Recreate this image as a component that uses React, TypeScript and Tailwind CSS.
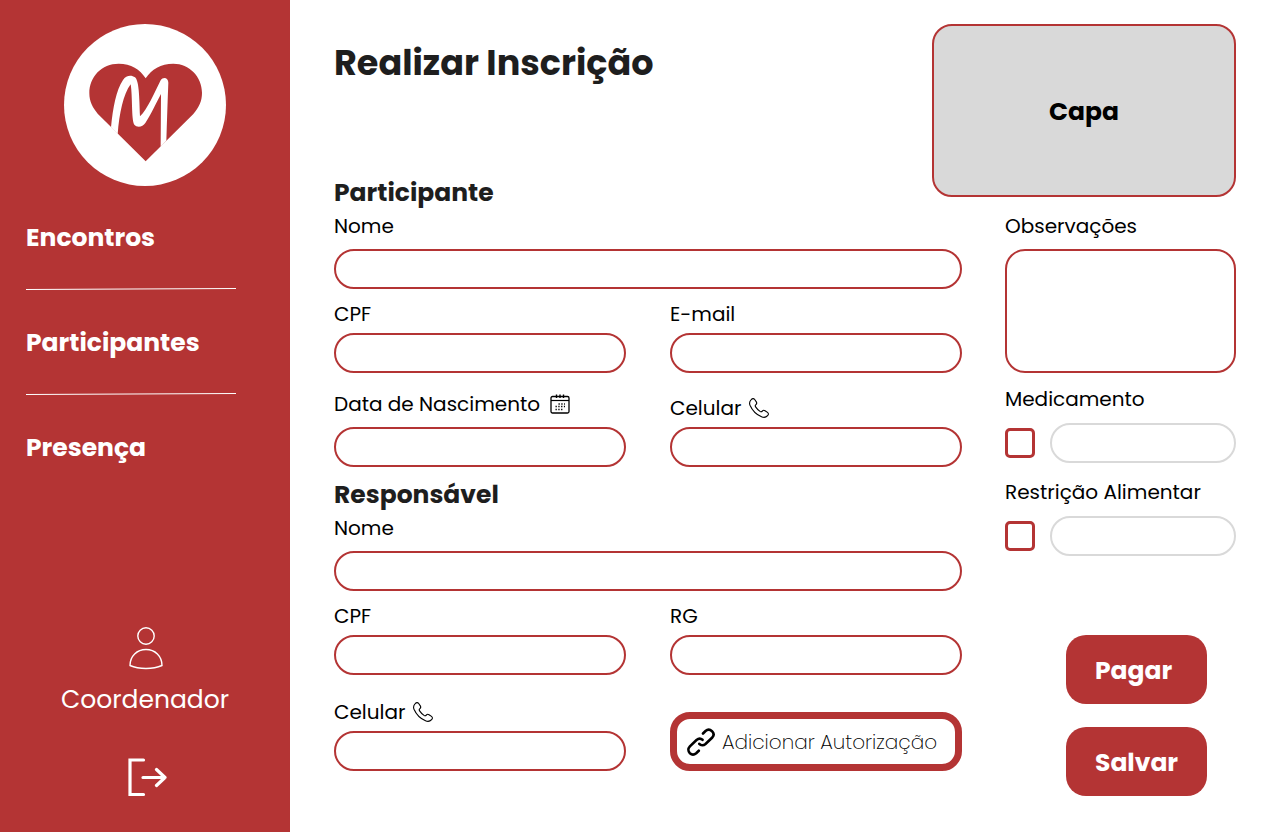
import type { ReactNode } from "react";

function Logo() {
  return (
    <svg viewBox="12 12 486 486" className="size-[162px]" role="img" aria-label="Logo">
      <circle cx="255" cy="255" r="243" fill="#fff" />
      <path
        d="M257 175C240 148 213 131 176 131C125 131 88 170 88 220C88 245 98 263 113 281L257 424L400 282C417 262 426 243 426 218C426 170 388 131 340 131C302 131 275 148 257 175Z"
        fill="#b43434"
      />
      <path
        d="M153 322C159 262 168 212 189 180C198 166 214 164 225 172C237 182 238 230 240 289C261 270 284 217 302 181C309 169 325 172 325 188C323 240 321 300 319 362L302 380L303 222C290 245 272 286 256 309C248 322 230 323 223 314C214 300 218 230 212 193C190 222 178 280 173 342Z"
        fill="#fff"
      />
    </svg>
  );
}

function PersonIcon() {
  return (
    <svg viewBox="-2 0 36 43" className="h-[43px] w-9" fill="none" stroke="currentColor" strokeWidth="1.4" aria-hidden="true">
      <circle cx="17" cy="9" r="8.2" />
      <path d="M1 38.5C1 29 8 22.500 17 22.500S33 29 33 38.500C24 42.500 10 42.500 1 38.500Z" strokeLinejoin="round" />
    </svg>
  );
}

function LogoutIcon() {
  return (
    <svg viewBox="-4 0 43 39" className="h-[39px] w-[43px]" fill="none" stroke="currentColor" strokeWidth="3.2" strokeLinecap="round" aria-hidden="true">
      <path d="M15.500 2H2V36.500H15.500" />
      <path d="M15 19.500H37M28.500 11.500L37 19.500L28.500 27.500" strokeLinejoin="round" />
    </svg>
  );
}

function CalendarIcon() {
  return (
    <svg viewBox="0 0 20 20" className="ml-0.5 size-5" fill="none" stroke="#000" aria-hidden="true">
      <rect x="1" y="2.500" width="18" height="16.500" rx="1.500" strokeWidth="1.300" />
      <path d="M1 6.500H19" strokeWidth="1.200" />
      <path d="M6.500 0.500V4M10 0.500V4M13.500 0.500V4" strokeWidth="1.400" />
      <path d="M8.500 10H15M5.500 12.500H15M5.500 15.500H12.500" strokeWidth="1.300" strokeDasharray="1.300 1.500" />
    </svg>
  );
}

function PhoneIcon() {
  return (
    <svg viewBox="0 0 20 20" className="size-5" fill="none" stroke="#000" strokeWidth="1.100" strokeLinejoin="round" aria-hidden="true">
      <path d="M2.200 1.600C3.400 0.300 4.800 0.300 5.700 1.500L7.300 3.900C8 5 7.800 5.900 6.900 6.600C6 7.300 6 8 6.600 8.900C7.800 10.700 9.300 12.200 11 13.400C11.900 14 12.700 13.900 13.300 13.100C14 12.200 15 12 16 12.700L18.500 14.400C19.700 15.300 19.700 16.500 18.600 17.700C17 19.400 15 19.900 12.500 18.800C7.300 16.500 3.200 12.200 1 7.200C0.100 5 0.700 3.100 2.200 1.600Z" />
    </svg>
  );
}

function LinkIcon() {
  return (
    <svg viewBox="0 0 28 30" className="h-[30px] w-7 shrink-0" fill="none" stroke="#000" strokeWidth="2.600" strokeLinecap="round" aria-hidden="true">
      <path d="M16 6.500L18.500 4C20.500 2.300 23.200 2.500 25 4.200C26.800 6 27 8.600 25.300 10.500L18.500 17C16.500 18.700 13.800 18.600 12.300 16.800" />
      <path d="M15.500 12.800C13.800 11.300 11.300 11.500 9.500 13L2.900 19.300C0.900 21.500 0.900 24.300 2.900 26.200C4.800 27.900 7.300 27.800 9.200 26.200L11.800 23.700" />
    </svg>
  );
}

function Divider() {
  return (
    <svg viewBox="0 0 210 2" preserveAspectRatio="none" className="h-[2px] w-full overflow-visible" aria-hidden="true">
      <path d="M0 0.500L210 -0.500" stroke="#fff" strokeWidth="1" />
    </svg>
  );
}

const label = "flex items-center gap-2 text-[20px] leading-[30px] text-black";
const pill = "h-10 w-full rounded-[20px] border-2 bg-white px-4 text-base outline-none";

function Field({ id, text, type = "text", icon, tight = false }: { id: string; text: string; type?: string; icon?: ReactNode; tight?: boolean }) {
  return (
    <div className={tight ? "flex flex-col gap-1" : "flex flex-col gap-2"}>
      <label htmlFor={id} className={label}>
        {text}
        {icon}
      </label>
      <input id={id} type={type} className={`${pill} border-[#b43434]`} />
    </div>
  );
}

function CheckField({ id, text }: { id: string; text: string }) {
  return (
    <div className="flex flex-col gap-[9px]">
      <label htmlFor={id} className={label}>{text}</label>
      <div className="flex items-center gap-[15px]">
        <input
          type="checkbox"
          aria-label={text}
          className="size-[30px] shrink-0 appearance-none rounded-[5px] border-3 border-[#b43434] bg-white checked:bg-[#b43434]"
        />
        <input id={id} type="text" className={`${pill} min-w-0 border-[#d9d9d9]`} />
      </div>
    </div>
  );
}

const heading = "text-[25px] leading-9 font-bold text-[#1e1e1e]";
const row = "grid grid-cols-2 items-end gap-11";
const action = "h-[69px] w-[141px] rounded-[20px] bg-[#b43434] px-[29px] pt-0.5 text-left text-[25px] font-bold text-white";

export default function App() {
  return (
    <div className="flex min-h-screen bg-white font-['Poppins','Inter',sans-serif]">
      <aside className="flex w-[290px] shrink-0 flex-col items-center bg-[#b43434] pt-6 pb-[35px] text-white">
        <Logo />
        <nav className="mt-[33px] flex w-full flex-col gap-[33px] pr-[54px] pl-[26px] text-[25px] leading-[37px] font-bold">
          <a href="#encontros">Encontros</a>
          <Divider />
          <a href="#participantes">Participantes</a>
          <Divider />
          <a href="#presenca">Presença</a>
        </nav>
        <a href="#perfil" className="mt-auto flex flex-col items-center gap-3 text-[25px] leading-9">
          <PersonIcon />
          Coordenador
        </a>
        <button type="button" aria-label="Sair" className="mt-10">
          <LogoutIcon />
        </button>
      </aside>

      <main className="grid flex-1 grid-cols-[1fr_231px] gap-x-[43px] pt-6 pr-11 pb-9 pl-11">
        <form className="flex min-w-0 flex-col">
          <h1 className="mt-[19px] mb-23 text-[35px] leading-10 font-bold text-[#1e1e1e]">Realizar Inscrição</h1>

          <h2 className={heading}>Participante</h2>
          <Field id="nome" text="Nome" />
          <div className={`${row} mt-2.5`}>
            <Field id="cpf" text="CPF" tight />
            <Field id="email" text="E-mail" type="email" tight />
          </div>
          <div className={`${row} mt-4`}>
            <Field id="nascimento" text="Data de Nascimento" icon={<CalendarIcon />} />
            <Field id="celular" text="Celular" type="tel" icon={<PhoneIcon />} tight />
          </div>

          <h2 className={`${heading} mt-2.5`}>Responsável</h2>
          <Field id="resp-nome" text="Nome" />
          <div className={`${row} mt-2.5`}>
            <Field id="resp-cpf" text="CPF" tight />
            <Field id="resp-rg" text="RG" tight />
          </div>
          <div className={`${row} mt-[22px]`}>
            <Field id="resp-celular" text="Celular" type="tel" icon={<PhoneIcon />} tight />
            <button
              type="button"
              className="flex h-[59px] w-full items-center gap-[7px] rounded-[20px] border-[7px] border-[#b43434] bg-white pl-2.5 text-[20px] font-[275] whitespace-nowrap text-black"
            >
              <LinkIcon />
              Adicionar Autorização
            </button>
          </div>
        </form>

        <section className="flex flex-col">
          <div className="-ml-[73px] flex h-[173px] items-center justify-center rounded-[20px] border-2 border-[#b43434] bg-[#d9d9d9] pt-0.5 text-[25px] font-bold text-black">
            Capa
          </div>
          <div className="mt-3.5 flex flex-col gap-2">
            <label htmlFor="observacoes" className={label}>Observações</label>
            <textarea id="observacoes" className="h-[124px] w-full resize-none rounded-[20px] border-2 border-[#b43434] bg-white p-3 text-base outline-none" />
          </div>
          <div className="mt-[11px] flex flex-col gap-3.5">
            <CheckField id="medicamento" text="Medicamento" />
            <CheckField id="restricao" text="Restrição Alimentar" />
          </div>
          <div className="mt-[79px] mr-[29px] flex flex-col items-end gap-[23px]">
            <button type="button" className={action}>Pagar</button>
            <button type="button" className={action}>Salvar</button>
          </div>
        </section>
      </main>
    </div>
  );
}
